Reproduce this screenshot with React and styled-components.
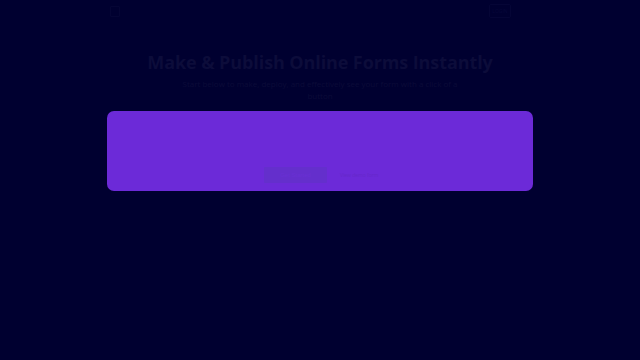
import React from "react";
import styled, { createGlobalStyle } from "styled-components";

const Global = createGlobalStyle`
  html, body { margin: 0; padding: 0; background: #000030; }
  body { font-family: "Open Sans", "Liberation Sans", sans-serif; }
`;

const Page = styled.div`
  width: 640px;
  height: 360px;
  background: #000030;
  display: flex;
  flex-direction: column;
  align-items: center;
`;

const Nav = styled.nav`
  width: 640px;
  height: 22px;
  box-sizing: border-box;
  padding: 0 129px 0 110px;
  display: flex;
  align-items: center;
  justify-content: space-between;
`;

const Logo = styled.div`
  width: 8px;
  height: 9px;
  border: 1px solid #050535;
  border-radius: 1px;
`;

const MenuButton = styled.div`
  width: 20px;
  height: 12px;
  border: 1px solid #050536;
  border-radius: 2px;
  display: flex;
  align-items: center;
  justify-content: center;
  font-size: 5px;
  color: #07073a;
`;

const Title = styled.h1`
  margin: 28px 0 0;
  font-family: "Open Sans", "Liberation Sans", sans-serif;
  font-weight: 700;
  font-size: 18px;
  line-height: 24px;
  color: #0c0c3a;
  letter-spacing: -0.1px;
`;

const Subtitle = styled.p`
  margin: 4px 0 0;
  width: 290px;
  text-align: center;
  font-size: 8px;
  line-height: 12px;
  color: #0b0b38;
`;

const Card = styled.section`
  margin-top: 9px;
  width: 426px;
  height: 80px;
  box-sizing: border-box;
  background: #6c2ad8;
  border-radius: 7px;
  display: flex;
  align-items: flex-end;
  justify-content: flex-start;
  padding: 0 0 8px 157px;
  gap: 13px;
`;

const Button = styled.button`
  width: 63px;
  height: 16px;
  border: none;
  border-radius: 1px;
  background: #642fcc;
  color: #6a2fd4;
  font-size: 6px;
  padding: 0;
`;

const Link = styled.span`
  font-size: 5px;
  color: #6528c9;
  line-height: 16px;
`;

export default function App() {
  return (
    <>
      <Global />
      <Page>
        <Nav>
          <Logo />
          <MenuButton>LOGIN</MenuButton>
        </Nav>
        <Title>Make &amp; Publish Online Forms Instantly</Title>
        <Subtitle>
          Start below to make, deploy, and effectively see your form with a click
          of a button
        </Subtitle>
        <Card>
          <Button>Get Started</Button>
          <Link>View demo form</Link>
        </Card>
      </Page>
    </>
  );
}
